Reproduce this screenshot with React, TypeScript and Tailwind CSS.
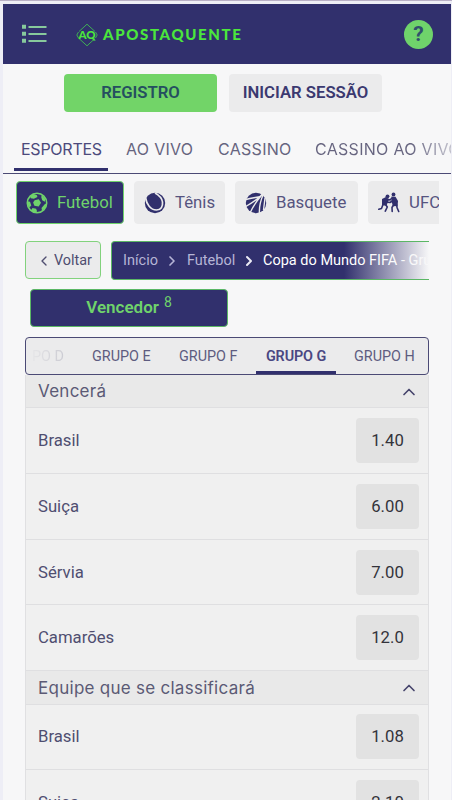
import { ChevronLeft, ChevronRight, ChevronUp } from "lucide-react";
import { FC, ReactNode } from "react";
import clsx from "clsx";

const MenuIcon: FC = () => (
  <svg className="h-[20px] w-[26px]" viewBox="0 0 26 20" fill="#87c99c">
    <path d="M0 .8h4v4H0zM0 7.800h4v4H0zM0 14.800h4v4H0zM6.500 2h18v2h-18zM6.500 9h18v2h-18zM6.500 16h18v2h-18z" />
  </svg>
);

const Logo: FC = () => (
  <div className="flex items-center pt-px">
    <div className="relative flex h-[24px] w-[22px] items-center justify-center">
      <svg
        className="absolute inset-0 h-full w-full"
        viewBox="0 0 22 24"
        fill="none"
        stroke="#3fae55"
        strokeWidth="1"
      >
        <path d="M3 8.500 11 1.200l8 7.300M3 15.500l8 7.300 8-7.300M2.500 9 .8 12l1.700 3M19.500 9l1.700 3-1.700 3" />
      </svg>
      <span className="relative font-[Lato] text-[11.500px] font-black leading-none text-[#4be63c]">
        AQ
      </span>
    </div>
    <span className="ml-[5px] font-[Lato] text-[15px] font-black leading-none tracking-[1.650px] text-[#4be63c]">
      APOSTAQUENTE
    </span>
  </div>
);

const FootballIcon: FC = () => (
  <svg className="h-[22px] w-[22px]" viewBox="0 0 22 22" fill="none">
    <circle cx="11" cy="11" r="9.700" stroke="#6fd36b" strokeWidth="1.600" />
    <g fill="#6fd36b">
      <path d="m8.600 8.200 4.200-.9 2.200 3.500-2.300 3.600-4.300-.6-1.300-3.400z" />
      <path d="m7 2 4 1.200.4 1.900-3.500 1.700L4.800 6.300 4 4.500zM16 3l3.300 4-.5 2.700-2.600-1.400-1-3.400zM2 9.500l2 .3 1.300 3.600-1.600 1.800L1.500 13zM18.700 12.200l1.800-.7-1 4.200-3.400 3.300-.6-2.900zM6.500 16l3.600.700 1 2.500-1.700 1.800-4.600-2.300z" />
    </g>
  </svg>
);

const TennisIcon: FC = () => (
  <svg className="h-[22px] w-[22px]" viewBox="0 0 22 22">
    <circle cx="11" cy="11" r="10.200" fill="#31306d" />
    <path
      d="M1.500 5.500C2.500 12 6.500 18 12.500 18c4.500 0 6.500-3.500 6-8C18 6.500 15.500 3.500 11 1"
      fill="none"
      stroke="#ebebec"
      strokeWidth="1.700"
    />
  </svg>
);

const BasketballIcon: FC = () => (
  <svg className="h-[22px] w-[22px]" viewBox="0 0 22 22">
    <circle cx="11" cy="11" r="10.200" fill="#31306d" />
    <g fill="none" stroke="#ebebec" strokeWidth="1.400">
      <path d="M1 7.500C6 6 11 5.500 15.500 4.500M0 15C7 11 13 7.500 17.500 2M5 21C8 14 12 8.500 17.500 2M14.500 22C14 16 15.500 8.500 18.500 2M20 6l-1.500 12" />
    </g>
  </svg>
);

const FightIcon: FC = () => (
  <svg className="h-[21px] w-[22px]" viewBox="0 0 22 21">
    <g fill="#31306d">
      <circle cx="9.500" cy="4.300" r="1.900" />
      <circle cx="15.500" cy="2.400" r="1.900" />
      <path d="m4 7 4-2 3 3-1 1.800-1.500 4-4.500-.5z" />
      <path d="m13.500 4.500 4 .2L20 9l-.4 5-4.600.2-1.500-5z" />
    </g>
    <g
      fill="none"
      stroke="#31306d"
      strokeWidth="1.600"
      strokeLinecap="round"
      strokeLinejoin="round"
    >
      <path d="M8 6.500 12 8l2-2M8 10l4 .5 3-2M5 12.500l-1.500 4-2.700.8M7.500 12.500 9.300 15l-2 4.200M15.500 13l-1.500 2.500.2 4M18.500 12.500l.7 3.500 1.500 3.500" />
    </g>
  </svg>
);

const Chip: FC<{ icon: ReactNode; label: string; className: string; active?: boolean }> = ({
  icon,
  label,
  className,
  active,
}) => (
  <div
    className={clsx(
      "flex h-[43px] shrink-0 items-center rounded-[4px] border pl-[9px] text-[16.800px]",
      active
        ? "border-[#6fd36b] bg-[#31306d] text-[#6fd36b]"
        : "border-[#ebebec] bg-[#ebebec] text-[#56547f]",
      className
    )}
  >
    {icon}
    <span className="ml-[9px] pt-px">{label}</span>
  </div>
);

const markets = [
  {
    title: "Vencerá",
    rows: [
      ["Brasil", "1.40"],
      ["Suiça", "6.00"],
      ["Sérvia", "7.00"],
      ["Camarões", "12.0"],
    ],
  },
  {
    title: "Equipe que se classificará",
    rows: [
      ["Brasil", "1.08"],
      ["Suiça", "2.10"],
    ],
  },
];

export default function App() {
  return (
    <div className="h-[800px] w-[452px] overflow-hidden border-t border-[#b9b0c6] bg-[#eeeef6] pl-[3px] pr-px pt-[3px] font-[Roboto,sans-serif]">
      <div className="h-[797px] overflow-hidden bg-[#f7f7f8]">
        <header className="flex h-[60px] items-center bg-[#31306d] pl-[19px] pr-[18px]">
          <MenuIcon />
          <div className="ml-[28px]">
            <Logo />
          </div>
          <div className="ml-auto flex h-[29px] w-[29px] items-center justify-center rounded-full bg-[#6fd36b] text-[21px] font-bold leading-none text-[#31506d]">
            ?
          </div>
        </header>

        <div className="mt-[10px] flex gap-[12px] pl-[61px] text-[16.700px] font-semibold">
          <div className="flex h-[38px] w-[153px] items-center justify-center rounded-[4px] bg-[#72d468] text-[#254f60]">
            REGISTRO
          </div>
          <div className="flex h-[38px] w-[153px] items-center justify-center rounded-[4px] bg-[#ebebec] text-[#3b3970]">
            INICIAR SESSÃO
          </div>
        </div>

        <nav className="mt-[14px] flex h-[48px] overflow-hidden whitespace-nowrap border-b border-[#4b4a75] pl-[11px] font-[Inter] text-[16px] tracking-[0.300px] text-[#66647f]">
          <div className="h-[45px] w-[94px] shrink-0 border-b-[3px] border-[#31306d] pl-[7px] leading-[46px] tracking-[-0.250px] text-[#4c4a7c]">
            ESPORTES
          </div>
          <div className="ml-[18px] w-[92px] shrink-0 leading-[46px]">AO VIVO</div>
          <div className="w-[97px] shrink-0 leading-[46px]">CASSINO</div>
          <div className="bg-linear-to-r from-[#66647f] from-65% to-[#d8d8df] bg-clip-text leading-[46px] text-transparent">
            CASSINO AO VIVO
          </div>
        </nav>

        <div className="mt-[7px] flex w-[436px] gap-[10px] overflow-hidden pl-[13px]">
          <Chip icon={<FootballIcon />} label="Futebol" className="w-[108px]" active />
          <Chip icon={<TennisIcon />} label="Tênis" className="w-[91px]" />
          <Chip icon={<BasketballIcon />} label="Basquete" className="w-[123px]" />
          <Chip icon={<FightIcon />} label="UFC" className="w-[100px]" />
        </div>

        <div className="mt-[17px] flex pl-[22px]">
          <div className="flex h-[38px] w-[76px] items-center rounded-[4px] border border-[#82d27d] bg-[#ebebec] pl-[10px] pt-px text-[14.400px] text-[#4f4e70]">
            <ChevronLeft size={16} strokeWidth={2} className="mr-[2px] shrink-0" />
            Voltar
          </div>
          <div className="relative ml-[10px] flex h-[39px] w-[318px] items-center overflow-hidden whitespace-nowrap rounded-l-[4px] border border-r-0 border-[#5bb765] bg-[#31306d] pl-[11px] text-[14.500px] text-[#b6b5d6]">
            <span className="w-[41px] shrink-0">Início</span>
            <ChevronRight size={16} strokeWidth={2.5} className="mr-[7px] shrink-0" />
            <span className="w-[54px] shrink-0">Futebol</span>
            <ChevronRight size={16} strokeWidth={3} className="mr-[6px] shrink-0 text-[#ebebf5]" />
            <span className="text-white">Copa do Mundo FIFA - Grupo</span>
            <div className="absolute inset-y-0 right-0 w-[85px] bg-linear-to-r from-transparent to-[#f7f7f8]" />
          </div>
        </div>

        <div className="ml-[27px] mt-[9px] flex h-[38px] w-[198px] items-center justify-center rounded-[4px] border border-[#5bb765] bg-[#31306d] text-[17px] font-semibold text-[#6fd36b]">
          Vencedor
          <span className="mb-[12px] ml-[5px] text-[14px] font-normal">8</span>
        </div>

        <div className="ml-[22px] mt-[10px] flex h-[38px] w-[404px] overflow-hidden whitespace-nowrap rounded-[4px] border border-[#4b4a75] bg-[#ebebec] text-[14.400px] leading-[37px] text-[#5e5c80]">
          <div className="w-[66px] shrink-0 bg-linear-to-r from-[#ebebec] to-[#b5b5c0] bg-clip-text pl-[6px] text-transparent">
            PO D
          </div>
          <div className="w-[87px] shrink-0">GRUPO E</div>
          <div className="w-[77px] shrink-0">GRUPO F</div>
          <div className="h-[36px] w-[80px] shrink-0 border-b-[3px] border-[#31306d] text-center font-semibold tracking-[-0.100px] text-[#4a4782]">
            GRUPO G
          </div>
          <div className="ml-[18px] shrink-0">GRUPO H</div>
        </div>

        <div className="ml-[22px] w-[404px] border-x border-[#e0e0e2] bg-[#f0f0f0]">
          {markets.map(({ title, rows }) => (
            <section key={title}>
              <div className="flex h-[33.400px] items-center border-b border-[#dfdfe1] bg-[#e9e9e9] pl-[12px] pr-[9px] pt-[2px] font-[Inter] text-[17px] tracking-[0.270px] text-[#5b5a75]">
                {title}
                <ChevronUp size={20} strokeWidth={2} className="ml-auto text-[#45436b]" />
              </div>
              {rows.map(([team, odd]) => (
                <div
                  key={team}
                  className="flex h-[65.700px] items-center justify-between border-b border-[#dfdfe1] pl-[12px] pr-[9px] text-[16.700px] text-[#4f4e70]"
                >
                  {team}
                  <div className="flex h-[45px] w-[63px] items-center justify-center rounded-[4px] bg-[#e2e2e2] text-[#33333a]">
                    {odd}
                  </div>
                </div>
              ))}
            </section>
          ))}
        </div>
      </div>
    </div>
  );
}
